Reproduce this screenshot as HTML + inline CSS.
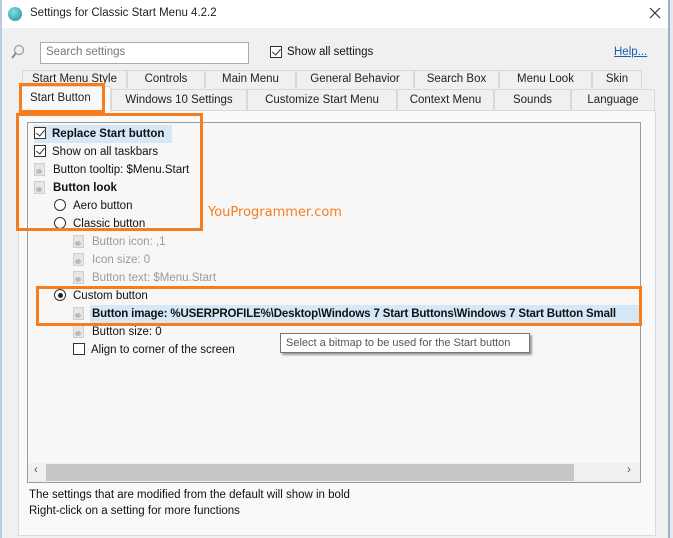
<!DOCTYPE html>
<html><head><style>
*{margin:0;padding:0;box-sizing:border-box}
body{width:673px;height:538px;background:#f0f0f0;font-family:"Liberation Sans",sans-serif;font-size:11.5px;color:#111;position:relative;overflow:hidden}
.a{position:absolute;white-space:nowrap}
.tab{position:absolute;height:18px;border:1px solid #d9d9d9;border-bottom:none;text-align:center;line-height:17px;background:#f0f0f0;color:#222}
.it{position:absolute;left:34px;height:18px;line-height:18px;white-space:nowrap}
.cb{display:inline-block;width:12px;height:12px;border:1px solid #333;background:#fff;vertical-align:-2px;margin-right:6px;position:relative}
.cb.c::after{content:"";position:absolute;left:3px;top:0px;width:4px;height:7px;border:solid #333;border-width:0 1.5px 1.5px 0;transform:rotate(40deg)}
.rb{display:inline-block;width:12px;height:12px;border:1px solid #333;border-radius:50%;background:#fff;vertical-align:-2px;margin-right:7px;position:relative}
.rb.c::after{content:"";position:absolute;left:2.5px;top:2.5px;width:5px;height:5px;border-radius:50%;background:#222}
.ic{display:inline-block;width:11px;height:13px;background:#e6e6e6;border:1px solid #cfcfcf;vertical-align:-3px;margin-right:8px;position:relative}
.ic::after{content:"";position:absolute;left:1px;top:5px;width:6px;height:5px;border-radius:50%;background:#bbb}
.g{color:#9a9a9a}
.ob{position:absolute;border:3px solid #f47d20}
</style></head><body>
<div class="a" style="left:0;top:0;width:669px;height:28px;background:#fff"></div>
<div class="a" style="left:668px;top:0;width:2px;height:538px;background:#8fb3d6"></div>
<div class="a" style="left:670px;top:0;width:3px;height:538px;background:#e8e8e8"></div>
<div class="a" style="left:0;top:0;width:2px;height:538px;background:#b9cde0"></div>
<div class="a" style="left:8px;top:7px;width:14px;height:14px;border-radius:50%;background:radial-gradient(circle at 40% 35%,#7fe3e0,#1a8a9a)"></div>
<div class="a" style="left:30px;top:7px;font-size:11.5px;color:#222">Settings for Classic Start Menu 4.2.2</div>
<svg class="a" style="left:649px;top:7px" width="12" height="12"><path d="M1 1L11 11M11 1L1 11" stroke="#333" stroke-width="1.2"/></svg>
<svg class="a" style="left:10px;top:44px" width="16" height="16"><circle cx="9" cy="6" r="4.5" fill="none" stroke="#8aa" stroke-width="1.3"/><line x1="6" y1="9" x2="2" y2="14" stroke="#889" stroke-width="2"/></svg>
<div class="a" style="left:40px;top:42px;width:209px;height:22px;border:1px solid #aaa;background:#fff;padding:3px 5px;color:#777">Search settings</div>
<div class="a" style="left:270px;top:46px"><span class="cb c"></span></div>
<div class="a" style="left:287px;top:46px">Show all settings</div>
<div class="a" style="left:614px;top:46px;color:#1a5fb4;text-decoration:underline">Help...</div>
<div class="tab" style="left:22px;top:70px;width:105px">Start Menu Style</div>
<div class="tab" style="left:127px;top:70px;width:78px">Controls</div>
<div class="tab" style="left:205px;top:70px;width:91px">Main Menu</div>
<div class="tab" style="left:296px;top:70px;width:118px">General Behavior</div>
<div class="tab" style="left:414px;top:70px;width:85px">Search Box</div>
<div class="tab" style="left:499px;top:70px;width:93px">Menu Look</div>
<div class="tab" style="left:592px;top:70px;width:50px">Skin</div>
<div class="tab" style="left:111px;top:89px;width:136px;height:22px;line-height:20px">Windows 10 Settings</div>
<div class="tab" style="left:247px;top:89px;width:150px;height:22px;line-height:20px">Customize Start Menu</div>
<div class="tab" style="left:397px;top:89px;width:97px;height:22px;line-height:20px">Context Menu</div>
<div class="tab" style="left:494px;top:89px;width:77px;height:22px;line-height:20px">Sounds</div>
<div class="tab" style="left:571px;top:89px;width:84px;height:22px;line-height:20px">Language</div>
<div class="a" style="left:18px;top:110px;width:638px;height:426px;background:#f9f9f9;border:1px solid #dadada"></div>
<div class="tab" style="left:20px;top:86px;width:91px;height:26px;background:#f9f9f9;line-height:22px;text-align:left;padding-left:9px;z-index:2;border-color:#dadada">Start Button</div>
<div class="a" style="left:27px;top:122px;width:614px;height:361px;border:1px solid #9a9a9a;background:#f7f7f7;overflow:hidden">
</div>
<div class="a" style="left:34px;top:125px;width:138px;height:18px;background:#d6e8f7"></div>
<div class="it" style="top:125px"><span class="cb c"></span><b>Replace Start button</b></div>
<div class="it" style="top:143px"><span class="cb c"></span>Show on all taskbars</div>
<div class="it" style="top:161px"><span class="ic"></span>Button tooltip: $Menu.Start</div>
<div class="it" style="top:179px"><span class="ic"></span><b>Button look</b></div>
<div class="it" style="top:197px;left:54px"><span class="rb"></span>Aero button</div>
<div class="it" style="top:215px;left:54px"><span class="rb"></span>Classic button</div>
<div class="it g" style="top:233px;left:73px"><span class="ic"></span>Button icon: ,1</div>
<div class="it g" style="top:251px;left:73px"><span class="ic"></span>Icon size: 0</div>
<div class="it g" style="top:269px;left:73px"><span class="ic"></span>Button text: $Menu.Start</div>
<div class="it" style="top:287px;left:54px"><span class="rb c"></span>Custom button</div>
<div class="a" style="left:90px;top:305px;width:550px;height:18px;background:#d6e8f7"></div>
<div class="it" style="top:305px;left:73px;width:565px;overflow:hidden;letter-spacing:-0.15px"><span class="ic"></span><b>Button image: %USERPROFILE%\Desktop\Windows 7 Start Buttons\Windows 7 Start Button Small</b></div>
<div class="it" style="top:323px;left:73px"><span class="ic"></span>Button size: 0</div>
<div class="it" style="top:341px;left:73px"><span class="cb"></span>Align to corner of the screen</div>
<div class="a" style="left:280px;top:333px;width:250px;height:20px;background:#fff;border:1px solid #767676;box-shadow:2px 2px 2px #999;padding:3px 5px;color:#555;font-size:11px;overflow:hidden">Select a bitmap to be used for the Start button</div>
<div class="a" style="left:208px;top:205px;font-family:'DejaVu Sans',sans-serif;font-size:13px;color:#f47d20">YouProgrammer.com</div>
<div class="a" style="left:28px;top:463px;width:612px;height:19px;background:#f0f0f0"></div>
<div class="a" style="left:46px;top:464px;width:528px;height:17px;background:#c6c6c6"></div>
<div class="a" style="left:34px;top:464px;color:#555">‹</div>
<div class="a" style="left:627px;top:464px;color:#555">›</div>
<div class="ob" style="left:16px;top:113px;width:187px;height:118px"></div>
<div class="ob" style="left:36px;top:286px;width:606px;height:40px"></div>
<div class="ob" style="left:19px;top:83px;width:86px;height:30px;z-index:3"></div>
<div class="a" style="left:29px;top:489px">The settings that are modified from the default will show in bold</div>
<div class="a" style="left:29px;top:505px">Right-click on a setting for more functions</div>
</body></html>
